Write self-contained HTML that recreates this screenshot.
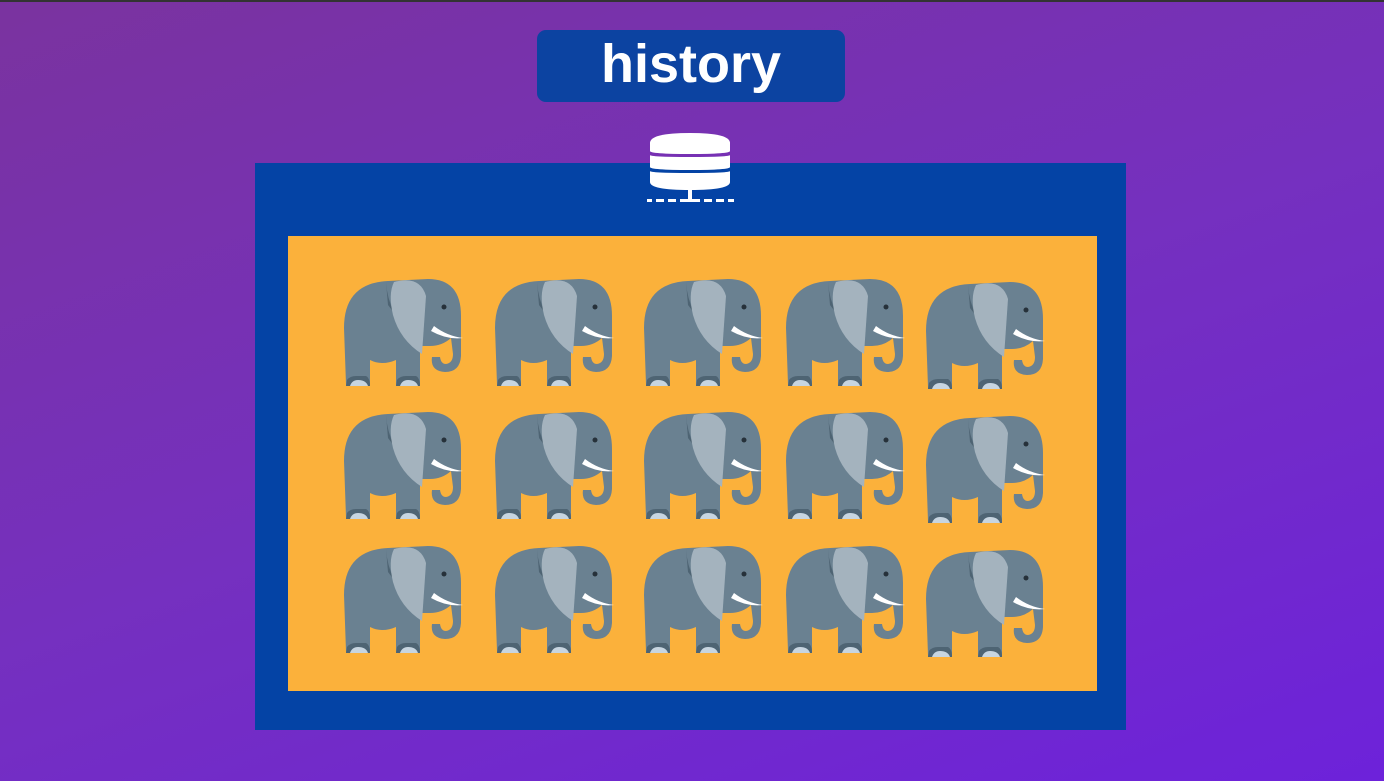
<!DOCTYPE html>
<html><head><style>
html,body{margin:0;padding:0}
body{width:1384px;height:781px;overflow:hidden;position:relative;background:linear-gradient(160deg,#7a339f 0%,#7530bf 50%,#6d22da 100%);font-family:"Liberation Sans",sans-serif}
.top{position:absolute;left:0;top:0;width:1384px;height:2px;background:#333}
.title{position:absolute;left:537px;top:30px;width:308px;height:72px;background:#0c43a1;border-radius:9px;color:#fff;font-weight:bold;font-size:54px;text-align:center;line-height:68px;letter-spacing:0px}
.panel{position:absolute;left:255px;top:163px;width:871px;height:567px;background:#0443a5}
.or{position:absolute;left:288px;top:236px;width:809px;height:455px;background:#fbb13b}
svg{position:absolute;left:0;top:0}
</style></head><body>
<div class="top"></div>
<div class="title">history</div>
<div class="panel"></div>
<div class="or"></div>
<svg width="1384" height="781">
<defs>
<g id="el">
<path d="M16,114 L14,58 Q14,13 58,11 L98,9 Q131,9 131,46 L131,86 Q130,102 115,102 Q100,101 102,87 L110,87 Q111,94 116,94 Q123,93 123,84 L121,68 Q112,76 100,76 L90,76 L90,116 L66,116 L66,90 Q52,96 40,90 L40,116 L16,116 Z" fill="#6a8191"/>
<path d="M56,12 Q58,45 86,72 L58,35 Z" fill="#4e6473"/>
<path d="M64,12 Q90,5 96,26 L92,84 Q70,70 63,45 Q58,24 64,12 Z" fill="#a4b3be"/>
<circle cx="114" cy="37" r="2.5" fill="#26313a"/>
<path d="M104,56 Q117,66 133,68 Q117,70 101,61 Z" fill="#fff"/>
<path d="M16,116 L17,110 Q20,106 26,106 L36,106 Q40,108 40,116 Z" fill="#4e6473"/>
<path d="M66,116 L67,110 Q70,106 76,106 L86,106 Q90,108 90,116 Z" fill="#4e6473"/>
<path d="M20,116 Q22,110 28,110 Q36,110 38,116 Z" fill="#c7d5e0"/>
<path d="M70,116 Q72,110 78,110 Q86,110 88,116 Z" fill="#c7d5e0"/>
</g>
</defs>
<g>
<use href="#el" transform="translate(330,270)"/>
<use href="#el" transform="translate(481,270)"/>
<use href="#el" transform="translate(630,270)"/>
<use href="#el" transform="translate(772,270)"/>
<use href="#el" transform="translate(912,273)"/>
<use href="#el" transform="translate(330,403)"/>
<use href="#el" transform="translate(481,403)"/>
<use href="#el" transform="translate(630,403)"/>
<use href="#el" transform="translate(772,403)"/>
<use href="#el" transform="translate(912,407)"/>
<use href="#el" transform="translate(330,537)"/>
<use href="#el" transform="translate(481,537)"/>
<use href="#el" transform="translate(630,537)"/>
<use href="#el" transform="translate(772,537)"/>
<use href="#el" transform="translate(912,541)"/>
</g>
<g fill="#fff">
<path d="M650,143 Q650,133 690,133 Q730,133 730,143 L730,151 Q730,154 690,154 Q650,154 650,151 Z"/>
<path d="M650,155 Q650,157 690,157 Q730,157 730,155 L730,167 Q730,170 690,170 Q650,170 650,167 Z"/>
<path d="M650,171 Q650,173 690,173 Q730,173 730,171 L730,182 Q730,190 690,190 Q650,190 650,182 Z"/>
<rect x="688" y="189" width="4" height="10"/>
<rect x="647" y="199" width="5" height="3"/><rect x="656" y="199" width="8" height="3"/><rect x="668" y="199" width="8" height="3"/><rect x="680" y="199" width="20" height="3"/><rect x="704" y="199" width="8" height="3"/><rect x="716" y="199" width="8" height="3"/><rect x="728" y="199" width="6" height="3"/>
</g>
</svg>
</body></html>
